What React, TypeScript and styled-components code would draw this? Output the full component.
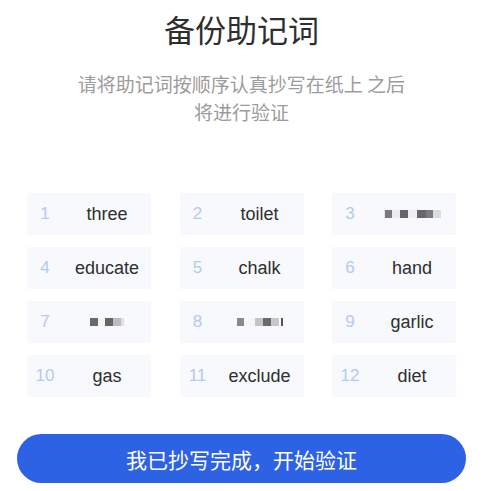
import React from 'react';
import styled, { createGlobalStyle } from 'styled-components';

type Tile = [number, string];

interface Word {
  index: number;
  text?: string;
  mosaic?: Tile[];
}

const words: Word[] = [
  { index: 1, text: 'three' },
  { index: 2, text: 'toilet' },
  {
    index: 3,
    mosaic: [
      [1, '#e6e6e6'],
      [7, '#7a7a7a'],
      [8, '#ececec'],
      [8, '#656565'],
      [9, '#efefef'],
      [9, '#676767'],
      [7, '#7d7d7d'],
      [8, '#dcdcdc'],
    ],
  },
  { index: 4, text: 'educate' },
  { index: 5, text: 'chalk' },
  { index: 6, text: 'hand' },
  {
    index: 7,
    mosaic: [
      [8, '#6a6a6a'],
      [7, '#f4f4f4'],
      [8, '#666666'],
      [8, '#bdbdbd'],
      [3, '#e0e0e0'],
    ],
  },
  {
    index: 8,
    mosaic: [
      [7, '#8a8a8a'],
      [11, '#f6f6f6'],
      [8, '#c4c4c4'],
      [8, '#6a6a6a'],
      [8, '#c8c8c8'],
      [2, '#ffffff'],
      [2, '#555555'],
    ],
  },
  { index: 9, text: 'garlic' },
  { index: 10, text: 'gas' },
  { index: 11, text: 'exclude' },
  { index: 12, text: 'diet' },
];

const App = () => {
  return (
    <>
      <GlobalStyle />
      <Page>
        <Title>备份助记词</Title>
        <Subtitle>
          请将助记词按顺序认真抄写在纸上 之后
          <br />
          将进行验证
        </Subtitle>
        <WordGrid>
          {words.map((word) => (
            <WordCell key={word.index}>
              <WordIndex>{word.index}</WordIndex>
              <WordText>
                {word.text ??
                  (word.mosaic && (
                    <Mosaic>
                      {word.mosaic.map(([w, c], i) => (
                        <MosaicTile key={i} $w={w} $c={c} />
                      ))}
                    </Mosaic>
                  ))}
              </WordText>
            </WordCell>
          ))}
        </WordGrid>
        <ConfirmButton>我已抄写完成，开始验证</ConfirmButton>
      </Page>
    </>
  );
};

export default App;

const GlobalStyle = createGlobalStyle`
  html, body {
    margin: 0;
    padding: 0;
    background: #ffffff;
  }
  body {
    font-family: 'Liberation Sans', 'Noto Sans CJK SC', sans-serif;
  }
  * {
    box-sizing: border-box;
  }
`;

const Page = styled.div`
  display: flex;
  flex-direction: column;
  align-items: center;
  width: 483px;
  height: 491px;
  padding-top: 9px;
`;

const Title = styled.h1`
  margin: 0;
  font-family: 'Noto Sans CJK SC', sans-serif;
  font-size: 31px;
  font-weight: 400;
  line-height: 40px;
  color: #2e2e2e;
`;

const Subtitle = styled.p`
  margin: 21px 0 0;
  font-family: 'Noto Sans CJK SC', sans-serif;
  font-size: 19px;
  line-height: 28px;
  color: #9c9c9c;
  text-align: center;
`;

const WordGrid = styled.div`
  display: grid;
  grid-template-columns: repeat(3, 124px);
  grid-auto-rows: 42px;
  column-gap: 28.5px;
  row-gap: 12px;
  margin-top: 67px;
`;

const WordCell = styled.div`
  display: flex;
  align-items: center;
  background: #f7f9fc;
`;

const WordIndex = styled.span`
  width: 36px;
  text-align: center;
  font-size: 17px;
  color: #b5caee;
`;

const WordText = styled.span`
  flex: 1;
  display: flex;
  justify-content: center;
  font-size: 18px;
  color: #2f2f2f;
`;

const Mosaic = styled.span`
  display: flex;
  height: 8px;
`;

const MosaicTile = styled.span<{ $w: number; $c: string }>`
  width: ${(p) => p.$w}px;
  height: 100%;
  background: ${(p) => p.$c};
`;

const ConfirmButton = styled.button`
  width: 449px;
  height: 49px;
  margin-top: 37px;
  border: none;
  border-radius: 25px;
  background: #2c62e3;
  color: #ffffff;
  font-family: 'Noto Sans CJK SC', sans-serif;
  font-size: 21px;
  cursor: pointer;
`;
